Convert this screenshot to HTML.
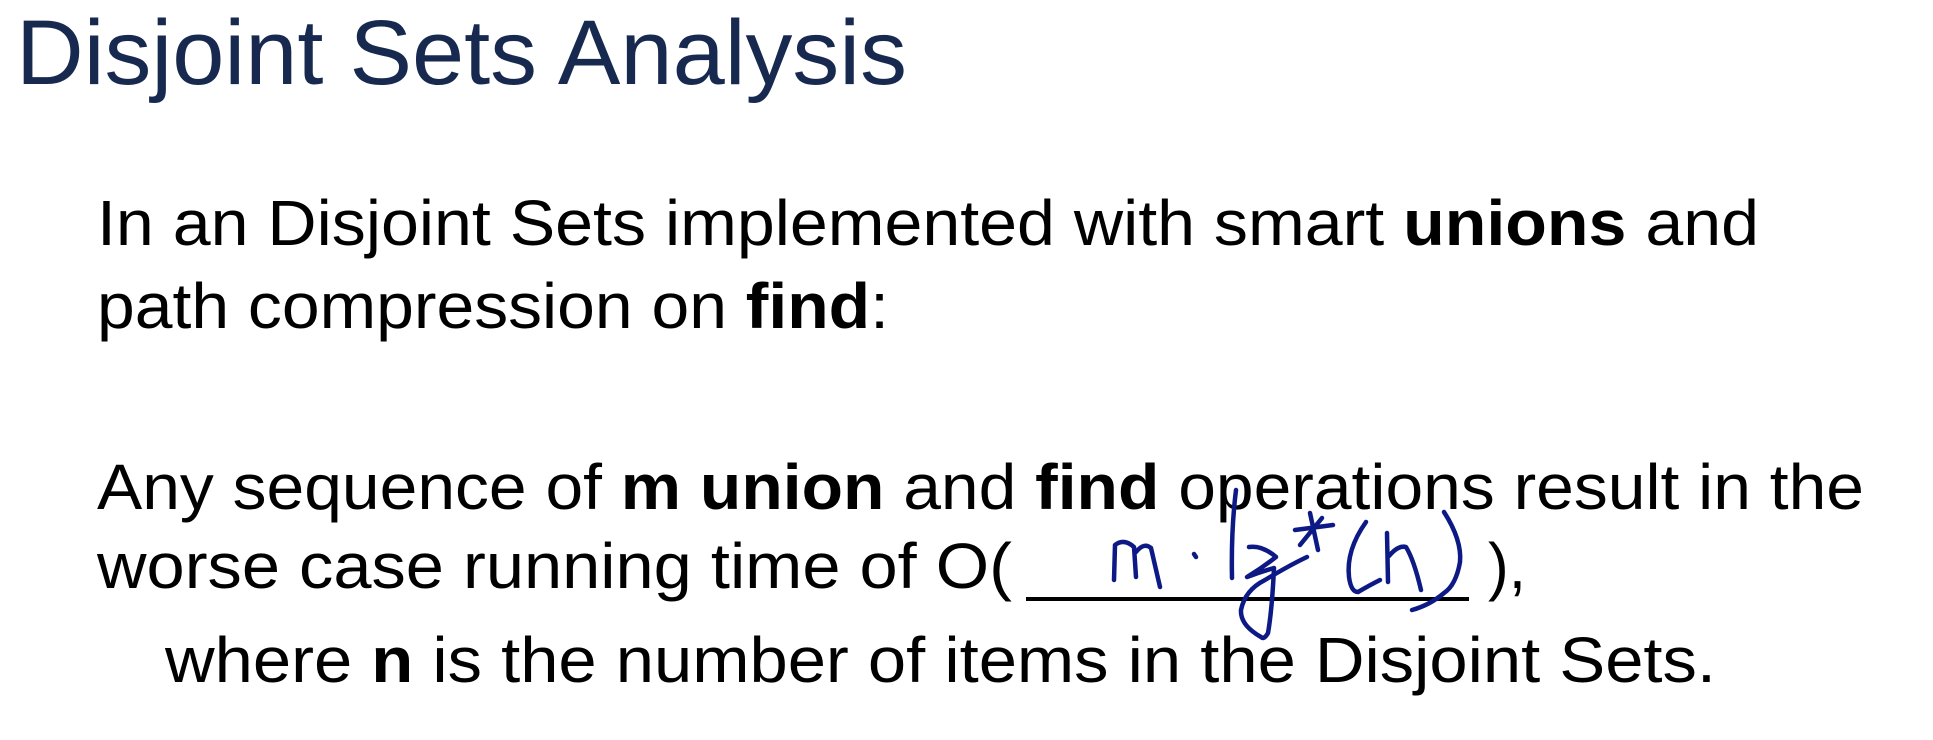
<!DOCTYPE html>
<html><head><meta charset="utf-8"><style>
html,body{margin:0;padding:0;background:#fff;width:1933px;height:740px;overflow:hidden}
svg{display:block}
text{font-family:"Liberation Sans",sans-serif;fill:#000}
</style></head><body>
<svg width="1933" height="740" viewBox="0 0 1933 740" xmlns="http://www.w3.org/2000/svg">
<text x="16" y="84" font-size="92" style="fill:#17294f" textLength="891" lengthAdjust="spacingAndGlyphs">Disjoint Sets Analysis</text>
<text x="97" y="245" font-size="64" textLength="1662" lengthAdjust="spacingAndGlyphs">In an Disjoint Sets implemented with smart <tspan font-weight="bold">unions</tspan> and</text>
<text x="97" y="328" font-size="64" textLength="792" lengthAdjust="spacingAndGlyphs">path compression on <tspan font-weight="bold">find</tspan>:</text>
<text x="97" y="509" font-size="64" textLength="1767" lengthAdjust="spacingAndGlyphs">Any sequence of <tspan font-weight="bold">m union</tspan> and <tspan font-weight="bold">find</tspan> operations result in the</text>
<text x="97" y="588" font-size="64" textLength="915" lengthAdjust="spacingAndGlyphs">worse case running time of O(</text>
<rect x="1026" y="597" width="443" height="4" fill="#000"/>
<text x="1488" y="588" font-size="64" textLength="38" lengthAdjust="spacingAndGlyphs">),</text>
<text x="165" y="682" font-size="64" textLength="1551" lengthAdjust="spacingAndGlyphs">where <tspan font-weight="bold">n</tspan> is the number of items in the Disjoint Sets.</text>
<g fill="none" stroke="#0d1a85" stroke-width="4.5" stroke-linecap="round" stroke-linejoin="round">
<path d="M1114 580 L1115 545 Q1124 538 1134 547 L1136 577 M1136 552 Q1144 542 1151 548 L1160 587"/>
<path d="M1194 554 L1196 557"/>
<path d="M1236 490 Q1231 530 1232 578"/>
<path d="M1249 547 Q1262 545 1276 557 Q1262 568 1247 577 Q1260 572 1274 568 Q1272 610 1268 633 Q1264 640 1261 637 Q1240 625 1241 610 Q1245 590 1265 580 Q1290 565 1307 557"/>
<path d="M1295 530 L1333 525 M1310 513 L1318 550 M1300 545 L1322 518"/>
<path d="M1366 522 Q1346 550 1349 577 Q1351 592 1358 592 Q1370 585 1380 580"/>
<path d="M1387 533 L1388 582 M1389 556 Q1398 545 1406 547 Q1414 560 1421 590"/>
<path d="M1444 512 Q1462 540 1460 562 Q1456 585 1444 593 Q1430 605 1412 610"/>
</g>
</svg>
</body></html>
